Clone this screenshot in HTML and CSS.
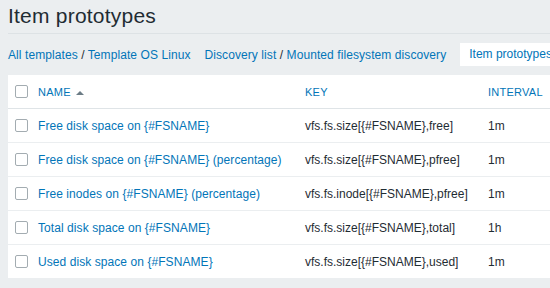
FILE: index.html
```html
<!DOCTYPE html>
<html>
<head>
<meta charset="utf-8">
<link rel="stylesheet" href="styles.css">
</head>
<body>
<div class="page">
  <header class="header">
    <h1 class="title">Item prototypes</h1>
  </header>
  <nav class="nav">
    <div class="crumbs"><a class="link">All templates</a> / <a class="link">Template OS Linux</a></div>
    <div class="crumbs"><a class="link">Discovery list</a> / <a class="link">Mounted filesystem discovery</a></div>
    <div class="tab">Item prototypes</div>
  </nav>
  <table class="list">
    <colgroup>
      <col class="c-cb"><col class="c-name"><col class="c-key"><col class="c-int">
    </colgroup>
    <thead>
      <tr>
        <th class="cb"><span class="box"></span></th>
        <th><a class="link sort">NAME</a></th>
        <th><a class="link">KEY</a></th>
        <th><a class="link">INTERVAL</a></th>
      </tr>
    </thead>
    <tbody>
      <tr><td class="cb"><span class="box"></span></td><td><a class="link name">Free disk space on {#FSNAME}</a></td><td>vfs.fs.size[{#FSNAME},free]</td><td>1m</td></tr>
      <tr><td class="cb"><span class="box"></span></td><td><a class="link name">Free disk space on {#FSNAME} (percentage)</a></td><td>vfs.fs.size[{#FSNAME},pfree]</td><td>1m</td></tr>
      <tr><td class="cb"><span class="box"></span></td><td><a class="link name">Free inodes on {#FSNAME} (percentage)</a></td><td>vfs.fs.inode[{#FSNAME},pfree]</td><td>1m</td></tr>
      <tr><td class="cb"><span class="box"></span></td><td><a class="link name">Total disk space on {#FSNAME}</a></td><td>vfs.fs.size[{#FSNAME},total]</td><td>1h</td></tr>
      <tr><td class="cb"><span class="box"></span></td><td><a class="link name">Used disk space on {#FSNAME}</a></td><td>vfs.fs.size[{#FSNAME},used]</td><td>1m</td></tr>
    </tbody>
  </table>
</div>
</body>
</html>
```
FILE: styles.css
```css
html, body {
  margin: 0;
  padding: 0;
  background: #ebeef0;
  overflow: hidden;
}
body {
  font-family: "Liberation Sans", Arial, sans-serif;
  font-size: 12px;
  color: #1f2c33;
}
.page {
  padding-left: 8px;
  width: 700px;
}
.header {
  padding-top: 4px;
  padding-bottom: 5px;
  border-bottom: 1px solid #dde2e5;
}
.title {
  margin: 0;
  font-size: 21px;
  line-height: 24px;
  font-weight: normal;
  letter-spacing: 0.22px;
  color: #1f2c33;
}
.nav {
  display: flex;
  align-items: center;
  margin: 9px 0;
  height: 23px;
  letter-spacing: 0.08px;
}
.crumbs {
  margin-right: 14px;
  white-space: nowrap;
}
.link {
  color: #0275b8;
  text-decoration: none;
}
.name {
  letter-spacing: 0.07px;
}
.tab {
  background: #ffffff;
  color: #0275b8;
  height: 23px;
  line-height: 23px;
  padding: 0 10px 0 9px;
  letter-spacing: 0;
  white-space: nowrap;
}
.list {
  border-collapse: collapse;
  table-layout: fixed;
  width: 692px;
  background: #ffffff;
}
.c-cb { width: 25px; }
.c-name { width: 267px; }
.c-key { width: 183px; }
.list th, .list td {
  height: 33px;
  padding: 0 0 0 5px;
  text-align: left;
  font-weight: normal;
  white-space: nowrap;
  border-bottom: 1px solid #ebeef0;
  vertical-align: middle;
}
.list th {
  height: 33px;
  font-size: 11px;
  letter-spacing: 0.25px;
  border-bottom: 1px solid #dfe4e7;
}
.list .cb {
  padding-left: 7px;
}
.box {
  display: block;
  width: 11px;
  height: 11px;
  border: 1px solid #a3acb1;
  border-radius: 2px;
  background: #ffffff;
}
.sort::after {
  content: "";
  display: inline-block;
  margin-left: 5px;
  vertical-align: 1px;
  border-left: 4px solid transparent;
  border-right: 4px solid transparent;
  border-bottom: 4px solid #6c7c86;
}
```
